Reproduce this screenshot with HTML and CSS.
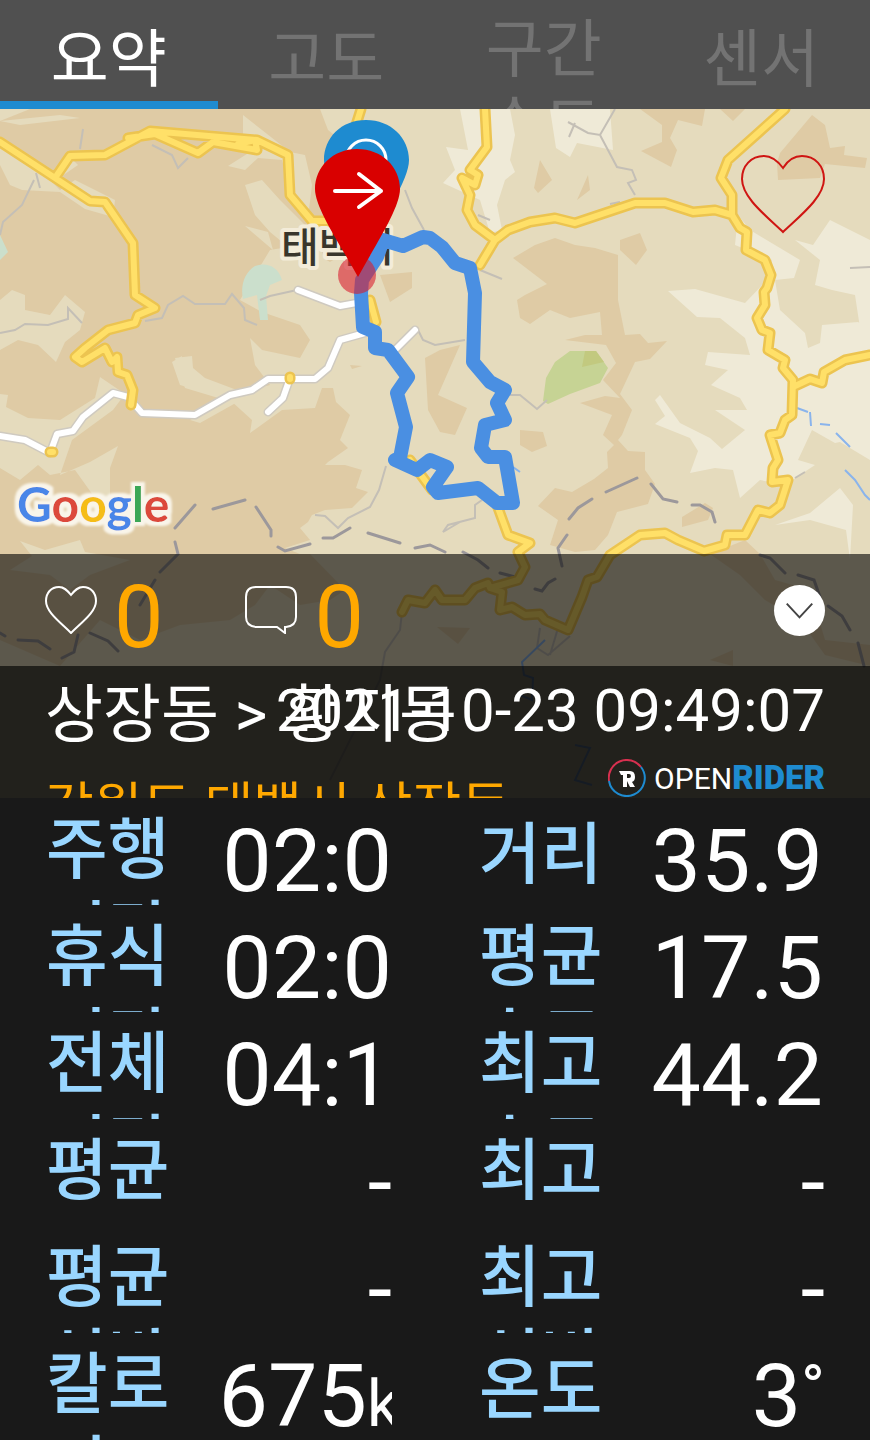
FILE: index.html
```html
<!DOCTYPE html>
<html lang="ko">
<head>
<meta charset="utf-8">
<meta name="viewport" content="width=device-width, initial-scale=1">
<title>상장동 &gt; 황지동</title>
<link rel="stylesheet" href="styles.css">
</head>
<body>
<nav class="tabs">
  <button class="tab tab--active" type="button">요약</button>
  <button class="tab" type="button">고도</button>
  <button class="tab tab--wrapped" type="button">구간 속도</button>
  <button class="tab" type="button">센서</button>
</nav>

<main>
<section class="hero">
  <svg class="map" viewBox="0 109 870 689" preserveAspectRatio="xMidYMin slice" aria-hidden="true">
    <defs>
      <filter id="halo" x="-10%" y="-20%" width="120%" height="140%">
        <feMorphology in="SourceAlpha" operator="dilate" radius="4" result="fat"/>
        <feGaussianBlur in="fat" stdDeviation="1" result="soft"/>
        <feFlood flood-color="#f9f5ea"/>
        <feComposite in2="soft" operator="in" result="edge"/>
        <feMerge><feMergeNode in="edge"/><feMergeNode in="SourceGraphic"/></feMerge>
      </filter>
    </defs>
    <rect class="land" x="0" y="109" width="870" height="689"/>
    <g class="hills">
      <path d="M0 121L30 109H320L328 130L350 148V250L330 262L300 245L270 250L255 275L240 300L262 312L300 325L310 340L300 358L262 350L250 338L255 365L270 385L230 395L195 388L180 370L182 356L172 362L180 385L230 400L252 420L250 433L282 410L315 408L322 388L333 388L336 402L350 415L340 440L348 448L328 462L325 465H345L362 470L356 488L368 492L352 508L325 510L312 515L308 522L300 528L310 540L285 548L300 554H310L345 590L330 600L300 605L270 585L255 605L230 620L180 625L140 640L100 620L60 666L0 640Z"/>
      <path d="M380 275L412 272V288L390 302ZM350 365L362 366L352 369ZM425 358L440 350L460 345L438 395L467 408L455 435L440 432L428 410Z"/>
      <path d="M513 258L535 245L555 238L575 245L595 248L618 255V300L625 335L640 334L648 343L667 341L650 359L635 362L620 394L632 410L622 435L618 440L628 451L645 452V470L655 484L648 504L617 512L608 535L595 550L575 552L550 545L558 520L538 506L555 488L572 492L594 479L608 468L607 452L614 445L603 435L612 415L580 403L605 396L620 398L603 380L616 363L606 345L565 340L585 335L602 335L600 312L570 318L550 310L530 324L520 318L517 300L525 295L547 284Z"/>
      <path d="M640 109H705L702 126L678 120L670 138L677 150L671 167L641 151L662 142V125ZM720 109H745L733 121ZM780 153L812 115L825 125L830 148L845 146L844 155L867 158L865 168L825 164L820 178L778 180L777 163Z"/>
      <path d="M540 160L552 180L538 193L534 188ZM588 175L590 190L577 200ZM620 240L640 233L647 250L636 265L620 250ZM520 430L543 432L547 446L532 452L520 445ZM682 517L705 503L713 508L708 520L682 527ZM710 554L745 540L760 554L775 580L810 590L825 640L870 645V666L825 655L800 620L765 600L740 575ZM437 627L470 628L458 644ZM710 660L733 650V666Z"/>
    </g>
    <g class="valleys">
      <path d="M0 121L60 115L80 118L20 125ZM0 145L40 170L60 190L75 180L115 200L113 217L85 209L60 192L22 190L10 185L0 165ZM70 157L78 165L62 176ZM243 115L262 130L290 152L305 155L312 185L308 218L290 190L282 160L258 158L245 170L228 166L250 152L243 140ZM245 185L262 180L280 200L315 235L325 260L310 265L270 232L255 215ZM245 226L268 232L273 250Z"/>
      <path d="M0 300L12 290L25 295V310L50 315L65 295L85 312L80 330L65 342L56 362L38 345L18 340L0 350ZM100 377L125 394L113 410L72 440L60 475L90 462L118 446L110 468V510L140 520L110 525L100 505L75 470L50 475L38 465L20 480L0 468V394L8 395L6 407L28 418L60 420L95 398ZM175 358L192 356L193 368L205 378L250 395L200 423L190 420L225 400L185 388ZM20 541L45 550L80 540L85 552L130 560L90 575L70 590L50 575L10 570L32 556Z"/>
      <path d="M460 109H510L515 135L510 160L515 172L505 180L497 205L502 230L490 233L480 200L443 183L455 170L446 147L468 150ZM550 109H610L613 150L577 143L570 157L556 148Z"/>
      <path d="M668 291L695 289L745 303L767 280L772 260L735 245L738 215L750 230L800 260L794 278L775 280L780 310L805 333L808 348L820 343L822 325L858 322L870 330V460L840 442L835 443L812 430L798 460L815 465L785 485L760 480L740 498L733 470L715 468L690 473L698 451L690 438L655 424L665 416L655 400L660 395L680 423L710 438L722 449L745 430L715 410L747 410L740 398L711 385L728 370L705 365L708 352L750 355L745 338L720 318L697 317ZM795 240L813 245L830 220L870 240V330L860 328L855 295L832 290L815 285L820 260ZM775 525L810 513L840 488L853 505L850 560L846 530L810 520Z"/>
    </g>
    <path class="water" d="M255 266C265 262 278 265 282 280L270 285L266 296L268 320L260 320L257 295L243 299C240 285 245 272 255 266ZM0 235L8 252L0 260Z"/>
    <path class="park" d="M543 401L546 378L555 362L570 351H596L608 368L600 383L570 394L548 404Z"/>
    <path class="park park--dark" d="M585 351H596L604 362L582 367Z"/>
    <g class="lanes">
      <path d="M83 129L80 149M152 145L172 155L178 168L188 158M36 173L40 188M34 180L22 205L3 222L0 235M0 333L15 330L25 324L48 325L68 319V308L82 323M145 321L162 318L168 305L183 296L195 304H225L232 294L244 308L245 320L257 325M260 300L270 296L297 290M405 190L412 208L424 230M418 330L423 340L435 345L465 340M568 122L588 133L600 135L615 109M575 123L569 137M600 135L617 167L632 170L636 180L628 183L635 195M610 204L620 202M480 270L502 279M478 215L490 220M510 395L520 395L537 409L547 400M386 466L379 490L370 507L348 518L338 528L325 516L315 515M482 500L475 505V518L448 525L443 532L460 522M402 612L400 630L385 652L380 680L330 780M540 628L537 648L548 655L570 636M558 628L550 655M850 268L870 267M795 478L805 472"/>
    </g>
    <path class="streams" d="M797 408L808 412M810 412L811 426M820 424L830 425M836 433L850 447M845 470L855 480L865 495L870 500M513 467L520 472M545 640L522 662L524 675L533 678L532 700L520 695M575 745L590 748L575 780L592 785"/>
    <g class="borders">
      <path d="M175 528L195 505M213 509L245 500M256 507L271 530V536M175 542L178 554L160 572M278 547L285 551L310 544M323 538H333L350 528M368 533L400 543M415 548L430 545L445 552M463 552L478 560L488 568M155 580L140 605M0 633L5 636M18 640L38 641L50 649M78 635L74 652L62 658M90 633L108 641L118 651M606 492L637 478M569 519L578 508L592 499M651 484L663 499L677 502M692 505H700L712 512L715 522M567 535L558 548L562 566M760 555L770 558L785 573M798 575L814 580L820 597M828 606L842 616L850 630M858 643L864 666M535 589L542 591L548 583L555 579M500 573L515 577"/>
    </g>
    <g class="road road--white-case"><use href="#white"/></g>
    <g class="road road--white"><path id="white" d="M0 436L25 440L50 453L57 434L73 431L83 417L113 393L128 397L142 413L195 415L230 395L252 390L268 379H315L328 368L340 340L372 331M290 378L283 398L268 412M298 290L340 306L362 302M393 352L415 330"/></g>
    <g class="road road--yellow-case"><use href="#yellow"/></g>
    <g class="road road--yellow"><path id="yellow" d="M0 142L55 178L90 201L105 202L133 243L135 295L155 308L138 315L135 323L108 330L85 348L75 357L82 362L105 348L112 362L117 357L118 372L127 375L133 390L131 405M57 175L70 156L105 155L150 131L257 140L288 155L290 195L312 221L330 221M128 138L155 134L198 153L213 142L257 150L255 140L238 144M361 109L356 125M485 109L487 147L470 170L478 175L475 185L462 178L470 195L467 210L475 225L495 240L508 230L530 222L555 218L575 223L635 203H665L693 212L715 210L732 215M495 240L480 265M785 109L728 160L721 178L732 195V215L740 228L747 232L746 250L765 260L771 275L767 288L764 292L765 305L757 318L762 330L770 333L768 350L785 360L783 368L793 380L792 415L785 420L780 433L770 435L778 460L773 468L772 482L788 480L780 505L770 513L758 510L745 535H727L725 545L704 551L678 540L665 533L640 535L610 555L597 577L588 580L582 597L568 630L545 620L540 614L525 615L512 607L500 610L502 592L490 588L488 583L475 588L465 600L442 600L435 590L425 603L408 600L402 612M793 387L810 379L822 383L824 372L845 360L870 355M497 505L508 535L530 543L518 552L525 567L518 580L490 588M370 300L376 322M410 460L432 490M50 452H53M290 377V379"/></g>
    <text class="place" x="281" y="262">태백시</text>
    <path class="route" d="M362 280L361 293L363 327L375 332V348L388 350L408 377L397 393L406 427L400 458L395 460L417 470L430 460L447 467L433 487L438 493L478 488L497 503H513L505 457H488L481 448L485 425L505 420L497 403L505 390L490 382L473 362L475 293L470 268L455 263L442 247L430 238L423 237L403 246L383 240L377 257L362 280"/>
    <circle class="spot" cx="357" cy="275" r="19"/>
    <path class="pin pin--end" d="M366 120C391 120 409 138 409 160C409 180 383 218 366 250C349 218 324 180 324 160C324 138 341 120 366 120Z"/>
    <circle class="pin-mark" cx="366" cy="160" r="20"/>
    <path class="pin pin--start" d="M357 149C382 149 400 167 400 189C400 208 376 244 358 277C340 244 315 208 315 189C315 167 333 149 357 149Z"/>
    <path class="pin-mark pin-mark--arrow" d="M335 191H381M359 174L381 191L359 207"/>
    <text class="google" x="17" y="522" filter="url(#halo)"><tspan class="g-blue">G</tspan><tspan class="g-red">o</tspan><tspan class="g-yellow">o</tspan><tspan class="g-blue">g</tspan><tspan class="g-green">l</tspan><tspan class="g-red">e</tspan></text>
  </svg>

  <div class="map-view">
    <button class="favorite" type="button" aria-label="좋아요">
      <svg viewBox="0 0 84 80"><path d="M42 14C36 6 30 2 23 2C10 2 1 12 1 25C1 43 24 61 42 78C60 61 83 43 83 25C83 12 74 2 61 2C54 2 47 6 42 14Z"/></svg>
    </button>
  </div>

  <div class="reactions">
    <button class="reaction" type="button" aria-label="좋아요 0">
      <svg viewBox="0 0 52 48"><path d="M26 9C22 4 19 1 14 1C6 1 1 7 1 15C1 26 15 36 26 47C37 36 51 26 51 15C51 7 46 1 38 1C33 1 30 4 26 9Z"/></svg>
      <span class="count">0</span>
    </button>
    <button class="reaction" type="button" aria-label="댓글 0">
      <svg viewBox="0 0 52 48"><path d="M11 1H41Q51 1 51 11V31Q51 40 41 41H40V47L32 41H11Q1 40 1 31V11Q1 1 11 1Z"/></svg>
      <span class="count">0</span>
    </button>
    <button class="expand" type="button" aria-label="펼치기">
      <svg viewBox="0 0 52 52"><path d="M13 19L26 33L39 19"/></svg>
    </button>
  </div>

  <div class="caption">
    <h1 class="title">상장동 &gt; 황지동</h1>
    <time class="date" datetime="2021-10-23T09:49:07">2021-10-23 09:49:07</time>
    <p class="address">강원도 태백시 상장동</p>
    <div class="brand">
      <svg viewBox="0 0 38 38" aria-hidden="true">
        <path class="ring ring--red" d="M1 22A18 18 0 0 1 33 8"/>
        <path class="ring ring--blue" d="M33 8A18 18 0 1 1 1 22"/>
        <path class="badge" d="M11 12H22Q27 12 27 18Q27 22 24 23L27 28H22L19 22V19H21Q23 19 23 17Q23 15 21 15H19V28H15V16H13Z"/>
      </svg>
      <span class="brand-name">OPEN<b>RIDER</b></span>
    </div>
  </div>
</section>

<dl class="metrics">
  <div class="metric"><dt>주행 시간</dt><dd>02:0</dd></div>
  <div class="metric"><dt class="single">거리</dt><dd class="decimal">35.9</dd></div>
  <div class="metric"><dt>휴식 시간</dt><dd>02:0</dd></div>
  <div class="metric"><dt>평균 속도</dt><dd class="decimal">17.5</dd></div>
  <div class="metric"><dt>전체 시간</dt><dd>04:1</dd></div>
  <div class="metric"><dt>최고 속도</dt><dd class="decimal">44.2</dd></div>
  <div class="metric"><dt>평균</dt><dd>-</dd></div>
  <div class="metric"><dt>최고</dt><dd>-</dd></div>
  <div class="metric"><dt>평균 심박</dt><dd>-</dd></div>
  <div class="metric"><dt>최고 심박</dt><dd>-</dd></div>
  <div class="metric"><dt>칼로리</dt><dd>675<small>k</small></dd></div>
  <div class="metric"><dt class="single">온도</dt><dd>3<small class="degree">°</small></dd></div>
</dl>
</main>
</body>
</html>
```
FILE: styles.css
```css
* { box-sizing: border-box; }
body {
  margin: 0;
  background: #191919;
  color: #fff;
  font-family: Roboto, "Noto Sans CJK KR", sans-serif;
}
button {
  margin: 0;
  padding: 0;
  border: 0;
  background: none;
  color: inherit;
  font: inherit;
}
svg { display: block; fill: none; }

.tabs {
  display: grid;
  grid-template-columns: repeat(4, 1fr);
  height: 109px;
  overflow: hidden;
  background: #505050;
}
.tab {
  display: flex;
  flex-wrap: wrap;
  align-items: flex-start;
  justify-content: center;
  height: 109px;
  padding: 21px 40px 0;
  border-bottom: 8px solid transparent;
  overflow: hidden;
  color: #737373;
  font-size: 63px;
  line-height: 77px;
  word-break: keep-all;
}
.tab--wrapped { padding-top: 11px; border-bottom: 0; }
.tab--active { border-color: #1e8bd0; color: #fff; }

.hero { position: relative; overflow: hidden; }
.map { position: absolute; inset: 0; width: 100%; height: 100%; }
.land { fill: #e5dbbd; }
.hills { fill: #dfcba5; }
.valleys { fill: #efead7; }
.valleys path:nth-child(-n+2) { fill: #e5dbbd; }
.water { fill: #cbdfcc; }
.park { fill: #c6d394; }
.park--dark { fill: #c2c97f; }
.lanes { stroke: #c4bfb6; stroke-width: 2; }
.streams { stroke: #8ab4ec; stroke-width: 2; }
.borders { stroke: #9c989b; stroke-width: 3; stroke-linecap: round; }
.road { stroke-linejoin: round; stroke-linecap: round; }
.road--white-case { stroke: #cfcac0; stroke-width: 9; }
.road--white { stroke: #fff; stroke-width: 6; }
.road--yellow-case { stroke: #ecc450; stroke-width: 11; }
.road--yellow { stroke: #ffe068; stroke-width: 6; }
.road--white-case use, .road--white path { stroke: inherit; }
.place {
  fill: #39362c;
  stroke: #f3ecd9;
  stroke-width: 8px;
  stroke-linejoin: round;
  paint-order: stroke;
  font-size: 41px;
  font-weight: 500;
}
.route { stroke: #4a8fe2; stroke-width: 14; stroke-linejoin: round; stroke-linecap: round; }
.spot { fill: #d91e2e; opacity: .6; }
.pin--end { fill: #1e8bd0; }
.pin--start { fill: #d90000; }
.pin-mark { stroke: #fff; stroke-width: 3; }
.pin-mark--arrow { stroke-width: 4; stroke-linecap: round; stroke-linejoin: round; }
.google { font-family: Lato, sans-serif; font-size: 48px; font-weight: 700; }
.g-blue { fill: #4a86e8; }
.g-red { fill: #dc483b; }
.g-yellow { fill: #f5bd18; }
.g-green { fill: #3ba757; }

.map-view {
  position: relative;
  display: flex;
  justify-content: flex-end;
  height: 445px;
  padding: 45px;
}
.favorite { width: 84px; height: 80px; }
.favorite svg { stroke: #cf1512; stroke-width: 2; }

.reactions {
  position: relative;
  display: flex;
  align-items: center;
  gap: 82px;
  height: 112px;
  padding: 0 45px;
  background: rgba(0, 0, 0, .6);
}
.reaction { display: flex; align-items: center; gap: 17px; }
.reaction svg { width: 52px; height: 48px; stroke: #fff; stroke-width: 2; }
.count { padding-top: 14px; color: #ffa800; font-size: 88px; line-height: 98px; }
.expand { margin-left: auto; border-radius: 50%; background: #fff; }
.expand svg { width: 51px; height: 51px; stroke: #444; stroke-width: 2; }

.caption {
  position: relative;
  display: grid;
  grid-template-columns: 1fr auto;
  grid-template-rows: 88px 44px;
  padding: 0 45px;
  overflow: hidden;
  background: rgba(0, 0, 0, .85);
}
.title, .date { grid-row: 1; white-space: nowrap; line-height: 88px; }
.title { grid-column: 1 / -1; margin: 0; padding-top: 5px; font-size: 63px; font-weight: 400; }
.date { grid-column: 1 / -1; justify-self: end; padding-top: 1px; font-size: 60px; }
.address {
  margin: 0;
  padding-top: 22px;
  color: #ffa800;
  font-size: 53px;
  line-height: 64px;
  white-space: nowrap;
}
.brand { display: flex; align-items: center; gap: 8px; height: 44px; padding-top: 4px; }
.brand svg { width: 38px; height: 38px; }
.ring { stroke-width: 2; }
.ring--red { stroke: #d8304f; }
.ring--blue { stroke: #1e8bd0; }
.badge { fill: #fff; }
.brand-name { font-size: 30px; line-height: 32px; }
.brand-name b { color: #1e8bd0; font-size: 33px; font-weight: 900; }

.metrics {
  display: grid;
  grid-template-columns: 1fr 1fr;
  column-gap: 86px;
  margin: 0;
  padding: 0 45px;
}
.metric {
  display: flex;
  justify-content: space-between;
  height: 107px;
  overflow: hidden;
}
dt {
  width: 136px;
  padding: 11px 0 0 1px;
  color: #99d6ff;
  font-size: 67px;
  font-weight: 500;
  line-height: 83px;
  word-break: break-all;
}
dt.single { padding-top: 16px; }
dd {
  width: 50%;
  margin: 0;
  overflow: hidden;
  font-size: 88px;
  line-height: 125px;
  text-align: right;
  white-space: nowrap;
}
dd.decimal { padding-right: 5px; overflow: visible; }
dd small { font-size: 64px; }
dd .degree { line-height: 1; vertical-align: 16px; }
```
